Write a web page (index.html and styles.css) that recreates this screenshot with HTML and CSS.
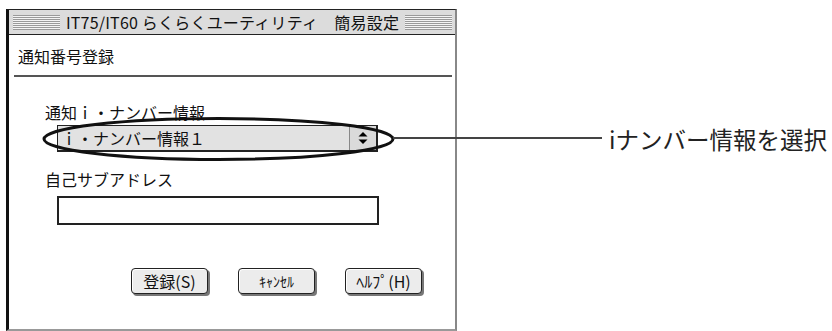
FILE: index.html
```html
<!DOCTYPE html>
<html>
<head>
  <title>IT75/IT60 らくらくユーティリティ 簡易設定</title>
  <link rel="stylesheet" href="styles.css">
</head>
<body>
  <div id="page">
    <div id="window">
      <div class="titlebar">
        <span class="stripes"></span>
        <span class="title">IT75/IT60 らくらくユーティリティ　簡易設定</span>
        <span class="stripes"></span>
      </div>
      <div class="heading">通知番号登録</div>
      <div class="rule"></div>

      <div class="form">
        <div class="label">通知ｉ・ナンバー情報</div>
        <div class="select">
          <span class="select-text">ｉ・ナンバー情報１</span>
          <span class="select-arrow">
            <svg width="10" height="12" viewBox="0 0 10 12">
              <path d="M5 0 L9.5 4.5 L0.5 4.5 Z" fill="#000"/>
              <path d="M5 12 L9.5 7.5 L0.5 7.5 Z" fill="#000"/>
            </svg>
          </span>
          <svg class="ring" width="353" height="46" viewBox="0 0 353 46">
            <ellipse cx="176.5" cy="23" rx="174.5" ry="20.5" fill="none" stroke="#111" stroke-width="3"/>
          </svg>
          <div class="leader"></div>
        </div>

        <div class="label second">自己サブアドレス</div>
        <div class="input"></div>

        <div class="buttons">
          <button>登録(S)</button>
          <button class="half">ｷｬﾝｾﾙ</button>
          <button>ﾍﾙﾌﾟ(H)</button>
        </div>
      </div>
    </div>

    <div id="callout">iナンバー情報を選択</div>
  </div>
</body>
</html>
```

FILE: styles.css
```css
body {
  margin: 0;
  background-color: #fff;
  font-family: "Noto Sans CJK JP", "Noto Sans", sans-serif;
  color: #111;
}
#page {
  display: flex;
  align-items: flex-start;
}
#window {
  margin: 9px 0 0 6px;
  width: 446px;
  height: 319px;
  border-top: 1px solid #222;
  border-left: 3px solid #111;
  border-right: 2px solid #888;
  border-bottom: 2px solid #999;
  background-color: #fff;
}
.titlebar {
  display: flex;
  align-items: center;
  gap: 6px;
  height: 25px;
  padding: 0 3px 0 4px;
  background-color: #dcdcdc;
  border-bottom: 1px solid #222;
  box-sizing: border-box;
}
.stripes {
  flex: 1;
  height: 15px;
  background: repeating-linear-gradient(to bottom, #9a9a9a 0, #9a9a9a 1px, #f4f4f4 1px, #f4f4f4 2px);
}
.title {
  font-size: 16px;
  line-height: 20px;
  letter-spacing: 0.2px;
  white-space: nowrap;
}
.heading {
  margin-top: 11px;
  padding-left: 9px;
  font-size: 16px;
  line-height: 20px;
}
.rule {
  margin: 9px 3px 0 5px;
  height: 2px;
  background-color: #555;
}
.form {
  padding-left: 36px;
}
.label {
  margin-top: 25px;
  font-size: 16px;
  line-height: 20px;
}
.label.second {
  margin-top: 17px;
}
.select {
  position: relative;
  display: flex;
  align-items: center;
  margin: 3px 0 0 12px;
  width: 321px;
  height: 27px;
  box-sizing: border-box;
  border: 1px solid #222;
  border-right-width: 2px;
  border-bottom-width: 2px;
  background-color: #e2e2e2;
}
.select-text {
  flex: 1;
  padding-left: 3px;
  font-size: 16px;
  line-height: 20px;
}
.select-arrow {
  display: flex;
  align-items: center;
  justify-content: center;
  width: 26px;
  height: 100%;
  border-left: 1px solid #888;
  background-color: #dadada;
}
.ring {
  position: absolute;
  left: -16px;
  top: -10px;
}
.leader {
  position: absolute;
  left: 335px;
  top: 11px;
  width: 209px;
  height: 2px;
  background-color: #444;
}
.input {
  margin: 7px 0 0 12px;
  width: 322px;
  height: 29px;
  box-sizing: border-box;
  border: 2px solid #222;
  background-color: #fff;
}
.buttons {
  display: flex;
  gap: 30px;
  margin: 43px 0 0 86px;
}
button {
  width: 77px;
  height: 26px;
  padding: 0;
  font-family: "Noto Sans CJK JP", "Noto Sans", sans-serif;
  font-size: 16px;
  line-height: 20px;
  color: #111;
  background-color: #ececec;
  border: 1px solid #222;
  border-radius: 4px;
  box-shadow: inset 1px 1px 0 #fff, 2px 2px 0 #777;
}
button.half {
  font-size: 14px;
}
#callout {
  margin: 125px 0 0 152px;
  font-size: 23.5px;
  line-height: 28px;
  color: #222;
  white-space: nowrap;
}
```
